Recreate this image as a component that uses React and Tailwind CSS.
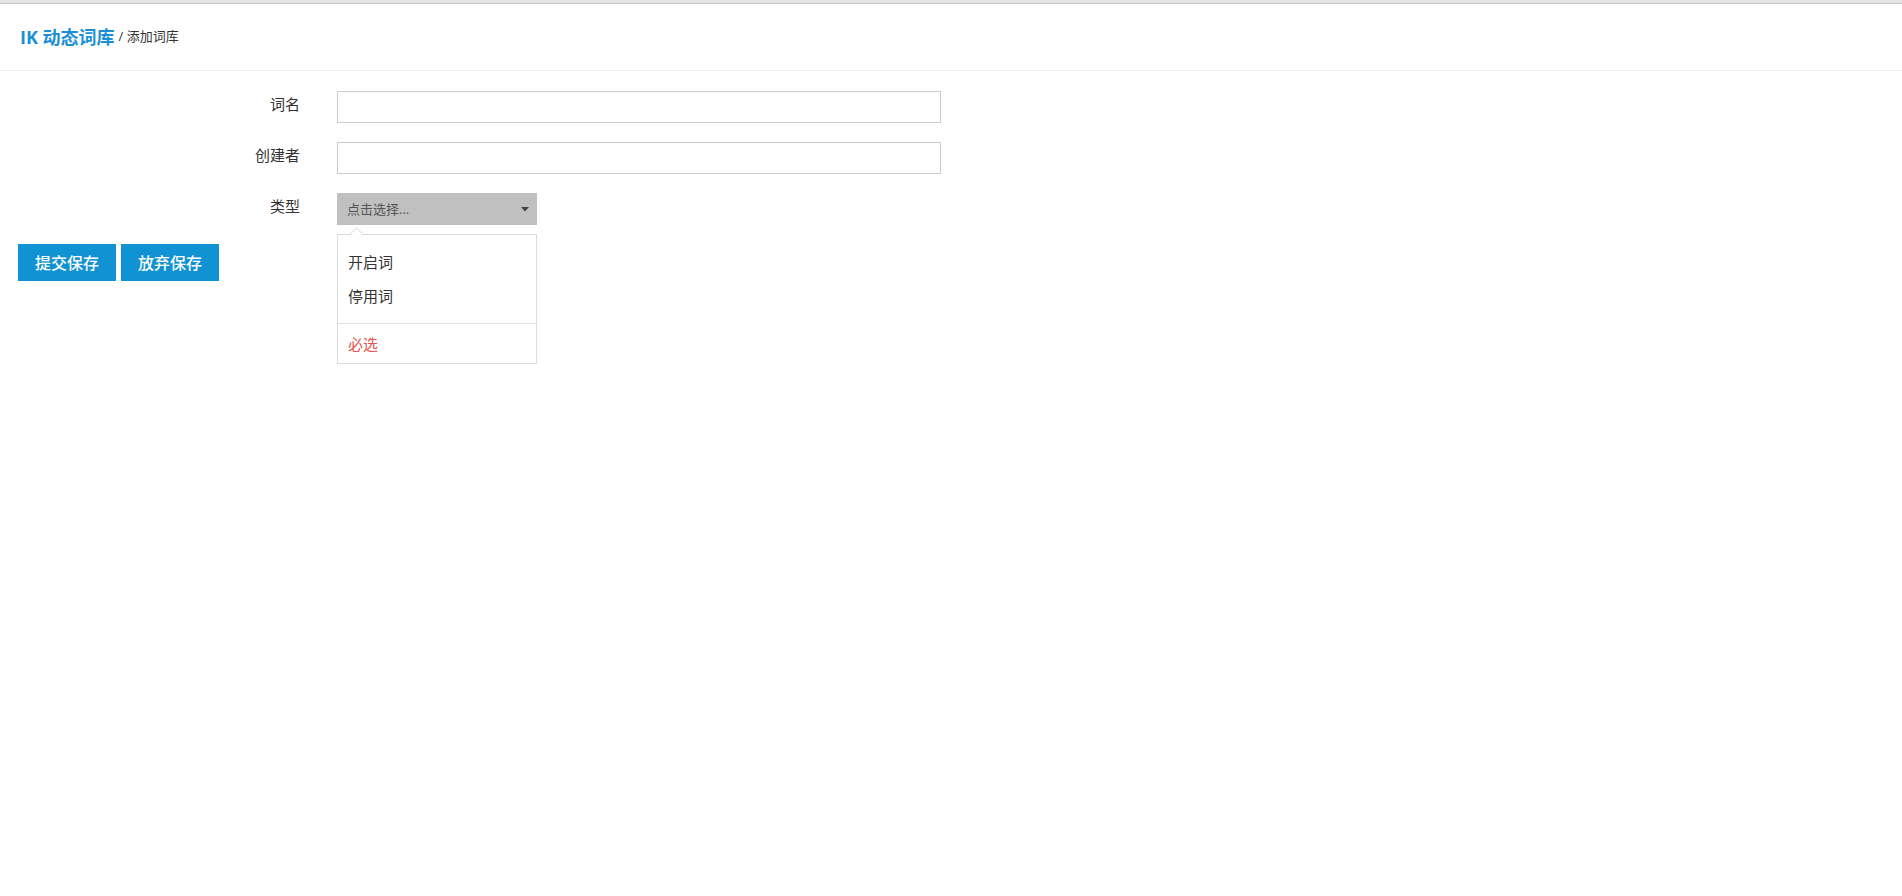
import React from 'react';

const font = { fontFamily: '"Open Sans", "Noto Sans CJK SC", sans-serif' };

const FormRow = ({ label, children }) => (
  <div className="flex items-center h-[32px] mb-[19px]">
    <label className="w-[300px] text-right text-[15px] text-[#333] leading-none -mt-[5px]">{label}</label>
    <div className="ml-[37px] relative">{children}</div>
  </div>
);

const TypeSelect = () => (
  <div className="relative">
    <div className="w-[200px] h-[32px] bg-[#c0c0c0] flex items-center justify-between pl-[10px] pr-[8px] cursor-pointer">
      <span className="text-[13px] text-[#555] leading-none">点击选择...</span>
      <svg width="8" height="5" viewBox="0 0 8 5">
        <path d="M0 0 L8 0 L4 4.5 Z" fill="#444" />
      </svg>
    </div>
    {/* open dropdown */}
    <div className="absolute left-0 top-[41px] w-[200px] h-[130px] bg-white border border-[#dcdcdc] z-10">
      <div className="absolute top-[-6px] left-[14px] w-[9px] h-[9px] bg-white border-l border-t border-[#dcdcdc] rotate-45"></div>
      <ul className="pt-[10px] pb-[10px]">
        <li className="h-[34px] flex items-center px-[10px] text-[15px] text-[#333]">开启词</li>
        <li className="h-[34px] flex items-center px-[10px] text-[15px] text-[#333]">停用词</li>
      </ul>
      <div className="border-t border-[#e2e2e2]"></div>
      <div className="h-[39px] pt-[1px] flex items-center px-[10px] text-[15px] text-[#e5534f]">必选</div>
    </div>
  </div>
);

export default function App() {
  return (
    <div className="min-h-[896px] bg-white" style={font}>
      <div className="h-[3px] bg-[#e3e3e3]"></div>
      <div className="h-px bg-[#c4c4c4]"></div>
      <div className="h-[67px] flex items-center px-5 border-b border-[#ececec]">
        <span className="text-[18px] font-bold text-[#1a8fd5]">IK 动态词库</span>
        <span className="ml-[4px] text-[13px] text-[#333]">/ 添加词库</span>
      </div>

      <form className="pt-[20px]">
        <FormRow label="词名">
          <input className="w-[604px] h-[32px] border border-[#ccc] px-2 text-[14px] outline-none" />
        </FormRow>
        <FormRow label="创建者">
          <input className="w-[604px] h-[32px] border border-[#ccc] px-2 text-[14px] outline-none" />
        </FormRow>
        <FormRow label="类型">
          <TypeSelect />
        </FormRow>
        <div className="flex gap-[5px] pl-[18px]">
          <button type="button" className="w-[98px] h-[37px] bg-[#1192d3] text-white text-[16px] font-medium">提交保存</button>
          <button type="button" className="w-[98px] h-[37px] bg-[#1192d3] text-white text-[16px] font-medium">放弃保存</button>
        </div>
      </form>
    </div>
  );
}
